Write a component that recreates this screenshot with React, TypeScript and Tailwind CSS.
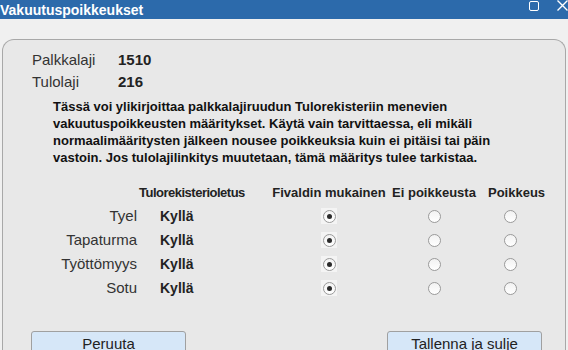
import { memo } from "react";

interface Row {
	label: string;
	value: string;
	selected: number;
}

const rows: Row[] = [
	{ label: "Tyel", value: "Kyllä", selected: 0 },
	{ label: "Tapaturma", value: "Kyllä", selected: 0 },
	{ label: "Työttömyys", value: "Kyllä", selected: 0 },
	{ label: "Sotu", value: "Kyllä", selected: 0 },
];

// Radio button, drawn with css
const Radio = ({ checked }: { checked: boolean }) => (
	<span className={`flex items-center justify-center w-[16px] h-[16px] ${checked ? "bg-[#f4f4f4]" : ""}`}>
		<span className="flex items-center justify-center w-[13px] h-[13px] rounded-full border border-[#9a9a9a] bg-gradient-to-b from-[#f2f2f2] to-white">
			{checked && <span className="w-[5px] h-[5px] rounded-full bg-[#2b2b2b]" />}
		</span>
	</span>
);

const App = () => {
	return (
		<div className="w-[568px] h-[350px] overflow-hidden flex flex-col bg-[#f0f0f0] font-['Liberation_Sans',Arial,sans-serif]">
			{/* title bar */}
			<div className="h-[19px] flex items-center justify-between bg-[#2c6aab] text-white shrink-0">
				<span className="text-[14px] font-bold leading-none">Vakuutuspoikkeukset</span>
				<div className="flex items-start self-start gap-[18px]">
					<span className="w-[10px] h-[10px] mt-[1px] border-[1.5px] border-white rounded-[2px]" />
					<svg width="11" height="11" viewBox="0 0 11 11">
						<path d="M0.5 0.5 L10.5 10.5 M10.5 0.5 L0.5 10.5" stroke="white" strokeWidth="1.4" />
					</svg>
				</div>
			</div>

			<div className="flex-1 pt-[20px] px-[2px] flex flex-col">
				<div className="flex-1 flex flex-col border border-b-0 border-[#a8a8a8] rounded-t-[12px] bg-[#e8e8e8] pt-[9px] text-[#222]">
					<div className="flex flex-col pl-[29px] text-[15px]">
						<div className="flex items-center h-[22px]">
							<span className="w-[86px] text-[#333]">Palkkalaji</span>
							<span className="font-bold">1510</span>
						</div>
						<div className="flex items-center h-[22px]">
							<span className="w-[86px] text-[#333]">Tulolaji</span>
							<span className="font-bold">216</span>
						</div>
					</div>

					<p className="mt-[5px] ml-[50px] w-[452px] text-[13px] leading-[17px] font-bold text-[#111]">
						Tässä voi ylikirjoittaa palkkalajiruudun Tulorekisteriin menevien vakuutuspoikkeusten määritykset. Käytä vain tarvittaessa, eli mikäli normaalimääritysten jälkeen nousee poikkeuksia kuin ei pitäisi tai päin vastoin. Jos tulolajilinkitys muutetaan, tämä määritys tulee tarkistaa.
					</p>

					<div className="mt-[18px] ml-[27px] grid grid-cols-[107px_129px_126px_84px_68px] text-[#222]">
						<div className="col-span-2 pl-[109px] text-[13px] tracking-[-0.5px] leading-[17px] font-bold whitespace-nowrap">Tulorekisterioletus</div>
						<div className="text-center text-[13px] leading-[17px] font-bold whitespace-nowrap">Fivaldin mukainen</div>
						<div className="text-center text-[13px] leading-[17px] font-bold whitespace-nowrap">Ei poikkeusta</div>
						<div className="pl-[12px] text-[13px] leading-[17px] font-bold whitespace-nowrap">Poikkeus</div>

						{rows.map((row, i) => (
							<div key={row.label} className="contents">
								<div className={`h-[24px] flex items-center justify-end text-[15px] text-[#333] ${i === 0 ? "mt-[3px]" : ""}`}>{row.label}</div>
								<div className={`h-[24px] flex items-center pl-[23px] text-[14px] font-bold ${i === 0 ? "mt-[3px]" : ""}`}>{row.value}</div>
								{[0, 1, 2].map((c) => (
									<div key={c} className={`h-[24px] flex items-center justify-center ${i === 0 ? "mt-[3px]" : ""}`}>
										<Radio checked={row.selected === c} />
									</div>
								))}
							</div>
						))}
					</div>

					<div className="mt-[31px] flex justify-between pl-[28px] pr-[23px]">
						<button className="w-[155px] h-[26px] pt-[1px] flex justify-center items-start rounded-[3px] border border-[#a0a0a0] bg-[#d6e7f8] text-[15px] text-[#222]">
							Peruuta
						</button>
						<button className="w-[155px] h-[26px] pt-[1px] flex justify-center items-start rounded-[3px] border border-[#a0a0a0] bg-[#d6e7f8] text-[15px] text-[#222]">
							Tallenna ja sulje
						</button>
					</div>
				</div>
			</div>
		</div>
	);
};

export default memo(App);
